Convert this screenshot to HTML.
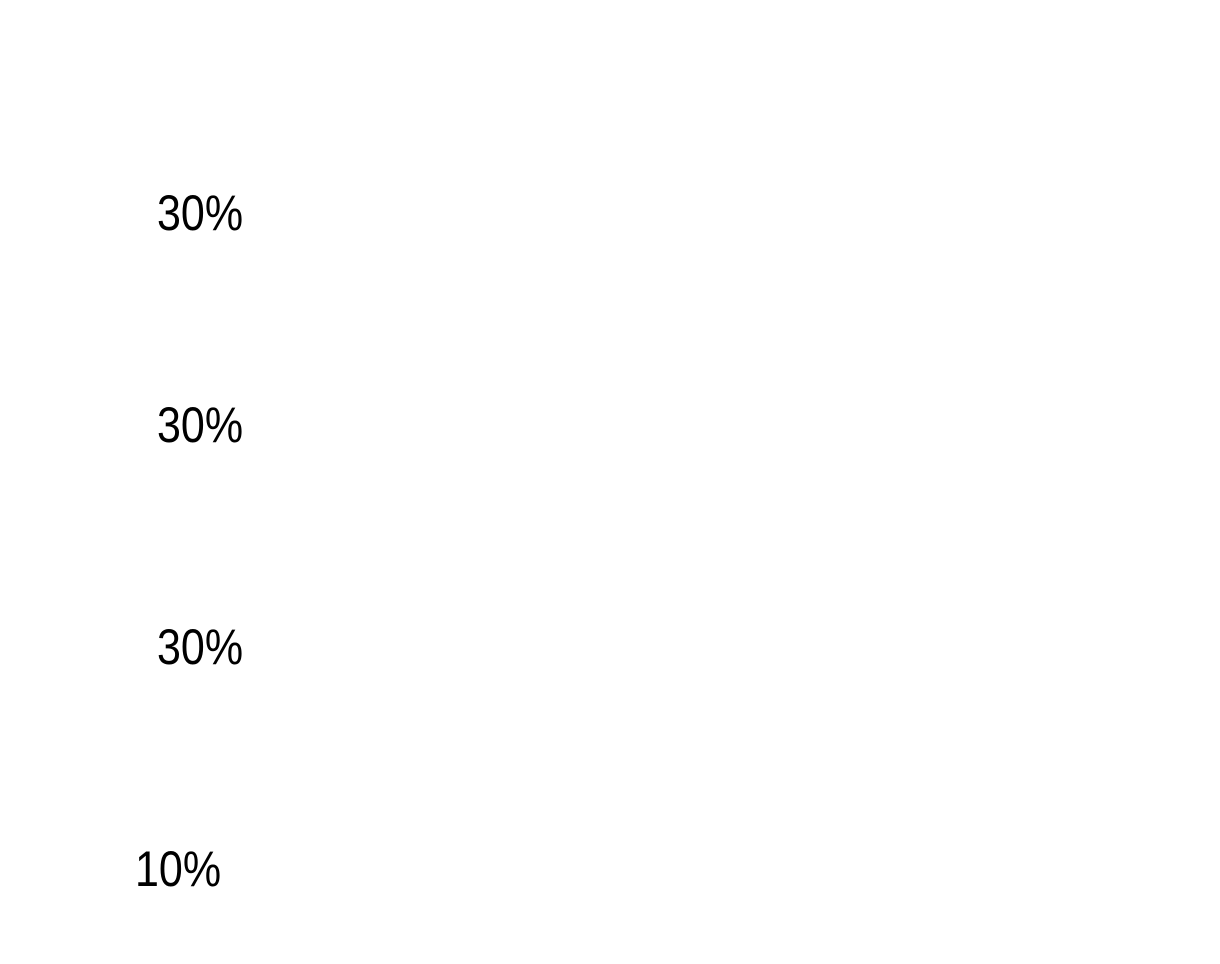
<!DOCTYPE html>
<html>
<head>
<meta charset="utf-8">
<style>
html,body{margin:0;padding:0;background:#fff;width:1220px;height:964px;overflow:hidden;}
.t{position:absolute;font-family:"Liberation Sans",sans-serif;font-size:50px;line-height:50px;color:#000;transform:scaleX(0.86);transform-origin:left top;white-space:nowrap;}
</style>
</head>
<body>
<div class="t" style="left:157px;top:188px">30%</div>
<div class="t" style="left:157px;top:400px">30%</div>
<div class="t" style="left:157px;top:622px">30%</div>
<div class="t" style="left:135px;top:844px">10%</div>
</body>
</html>
